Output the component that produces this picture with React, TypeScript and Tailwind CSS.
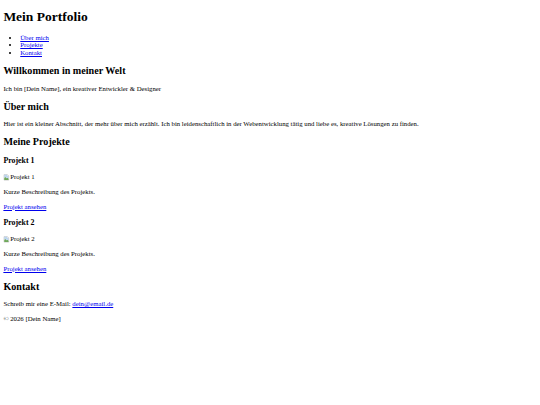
import React from "react";

function BrokenImage({ alt }: { alt: string }) {
  return (
    <div className="h-[8.23px] leading-[8.23px] flex items-center">
      <svg width="6.75" height="6.75" viewBox="0 0 16 16" className="shrink-0">
        <path d="M2.5 1.5h8l3 3v10h-11z" fill="#f2f2f2" stroke="#9a9a9a" strokeWidth="1" />
        <path d="M3 14V9l3-2 3 3 2-1 2 2v3z" fill="#6fa85a" />
        <path d="M3 9V2h7v3h3v6l-2-2-2 1-3-3z" fill="#bcd6ef" />
      </svg>
      <span>{alt}</span>
    </div>
  );
}

function Project({ n }: { n: number }) {
  return (
    <div>
      <h3 className="text-[7.8975px] leading-[9.28px] font-bold my-[1em]">Projekt {n}</h3>
      <BrokenImage alt={`Projekt ${n}`} />
      <p className="my-[1em]">Kurze Beschreibung des Projekts.</p>
      <a href="#" className="text-[#0000ee] underline">Projekt ansehen</a>
    </div>
  );
}

export default function App() {
  return (
    <div className="m-[3.375px] font-[family-name:Liberation_Serif,serif] text-[6.75px] leading-[7.594px] text-black bg-white">
      <header>
        <h1 className="text-[13.5px] leading-[15.61px] font-bold my-[0.67em]">Mein Portfolio</h1>
        <nav>
          <ul className="list-disc pl-[16.875px] my-[1em]">
            <li><a href="#about" className="text-[#0000ee] underline">Über mich</a></li>
            <li><a href="#projects" className="text-[#0000ee] underline">Projekte</a></li>
            <li><a href="#contact" className="text-[#0000ee] underline">Kontakt</a></li>
          </ul>
        </nav>
      </header>
      <main>
        <section>
          <h2 className="text-[10.125px] leading-[11.39px] font-bold my-[0.83em]">Willkommen in meiner Welt</h2>
          <p className="my-[1em]">Ich bin [Dein Name], ein kreativer Entwickler &amp; Designer</p>
        </section>
        <section>
          <h2 className="text-[10.125px] leading-[11.39px] font-bold my-[0.83em]">Über mich</h2>
          <p className="my-[1em]">
            Hier ist ein kleiner Abschnitt, der mehr über mich erzählt. Ich bin leidenschaftlich in der Webentwicklung tätig und liebe es, kreative Lösungen zu finden.
          </p>
        </section>
        <section>
          <h2 className="text-[10.125px] leading-[11.39px] font-bold my-[0.83em]">Meine Projekte</h2>
          <Project n={1} />
          <Project n={2} />
        </section>
        <section>
          <h2 className="text-[10.125px] leading-[11.39px] font-bold my-[0.83em]">Kontakt</h2>
          <p className="my-[1em]">
            Schreib mir eine E-Mail: <a href="mailto:dein@email.de" className="text-[#0000ee] underline">dein@email.de</a>
          </p>
        </section>
      </main>
      <footer>
        <p className="my-[1em]">© 2026 [Dein Name]</p>
      </footer>
    </div>
  );
}
